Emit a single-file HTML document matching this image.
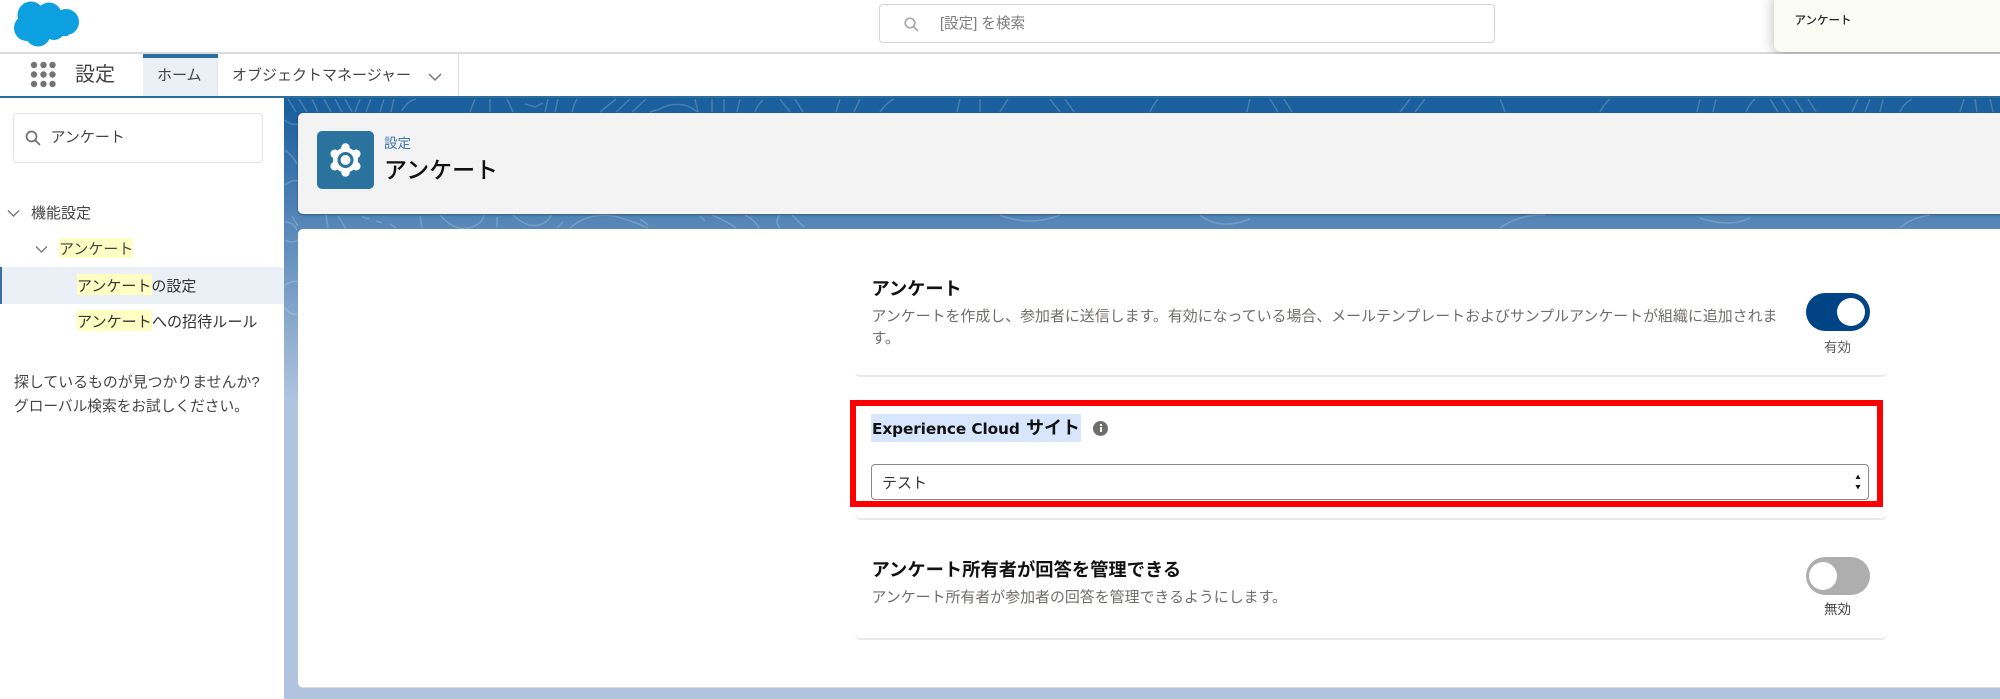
<!DOCTYPE html>
<html lang="ja">
<head>
<meta charset="utf-8">
<title>アンケート</title>
<style>
html,body{margin:0;padding:0;width:2000px;height:699px;overflow:hidden;background:#fff}
body{position:relative;font-family:"Liberation Sans","Noto Sans CJK JP",sans-serif;color:#444}
.a{position:absolute;white-space:nowrap}
.t{position:absolute;white-space:nowrap;line-height:24px;height:24px;font-size:15px;margin-top:1.4px}
svg{position:absolute;overflow:visible}
</style>
</head>
<body>
<!-- background -->
<div class="a" style="left:284px;top:98px;width:1716px;height:601px;background:linear-gradient(to bottom,#1b5f9e 0,#1b5f9e 12px,#b0c4df 302px,#b0c4df 100%)"></div>
<svg style="left:0;top:0" width="2000" height="699" fill="none" stroke="#fff" stroke-opacity=".2" stroke-width="1.5">
<path d="M288 99l8 13M299 99l8 13M312 99l6 13M324 99l7 13M335 99l7 13M345 99l7 13M360 99l-5 13M371 99l-5 13M384 99l-4 13M394 99l-3 13M402 111q5-10 14-12M475 99l-5 13M490 99v13M507 99l6 13M525 104l10 3 8-4M548 99l-3 13M558 99l-3 13M572 112q2-8 5-13M600 112l16-13M616 112l14-13M632 112l14-13M650 112l10-3q14-8 30-2l8 5M695 99l3 13M712 99v13M724 99v13M740 99l-3 13M755 112q3-8 8-12M780 99l10 13M795 99l8 13"/>
<path d="M1700 99l-3 13M1716 99l-3 13M1746 112q4-9 9-13M1770 99l8 13M1782 99l8 13M1795 99l8 13M1808 99l8 13M1852 112l6-13M1865 112l5-13M1880 112l3-13M1900 112q4-9 12-13M1960 112l4-13M1975 99l2 13M1990 99l3 13M840 99l-4 13M860 99l-6 13M880 112q6-9 14-13M960 99l-3 13M980 99v13M1000 112l8-13M1050 99l10 13M1065 99l9 13M1150 112q3-7 8-13M1250 99l-3 13M1270 99l8 13M1284 99l8 13M1400 112l10-13M1415 112l10-13M1500 99l5 13M1600 112q4-8 10-13"/>
<path d="M298 226l-6-10M326 215l2 13M338 216l8 13M362 217l8 2M376 221l6 2M390 224l6 4M420 216l2 12M440 215q14 16 28 13 14-3 16-13M497 217v10M513 215q14 13 26 10 10-3 12-10M557 228l6-6M570 228q18-16 44-12 22 6 34 12M640 219l8 6M700 216l5 5M712 215q18 8 24 13M745 215q10 5 14 13M780 215q-6 6 0 13M792 215l12 12"/>
<path d="M1000 215q30 12 60 0M1200 215q20 16 50 4M1500 228q20-14 45-13M1700 218q30 10 50 0M1900 228q10-10 30-13"/>
<path d="M285 150q8 6 12 14M285 185q8-6 13-4M285 222q8 0 12 8M285 240q7 4 13 0M285 285q7-5 13-3M285 308q6 8 13 6M285 120q6 6 13 4"/>
</svg>

<!-- top header -->
<div class="a" style="left:0;top:0;width:2000px;height:52px;background:#fff"></div>
<div class="a" style="left:0;top:52px;width:2000px;height:2px;background:#dcdcdc"></div>
<svg style="left:0;top:0" width="90" height="52" fill="#0ca0e0">
<rect x="24" y="12" width="44" height="24"/>
<circle cx="27" cy="28" r="13"/><circle cx="31" cy="15" r="13.5"/><circle cx="49" cy="15" r="12.5"/><circle cx="66" cy="22" r="13"/><circle cx="38" cy="34" r="12.5"/><circle cx="54" cy="29" r="11"/>
</svg>
<!-- global search -->
<div class="a" style="left:879px;top:4px;width:614px;height:37px;border:1.5px solid #d4d4d4;border-radius:4px;background:#fff"></div>
<svg style="left:904px;top:17px" width="15" height="15" fill="none" stroke="#a8a8a8" stroke-width="1.7"><circle cx="6" cy="6" r="4.8"/><path d="M9.5 9.5l4 4" stroke-linecap="round"/></svg>
<div class="t" style="left:940px;top:11px;color:#7c7c7c;font-size:14.6px">[設定] を検索</div>
<!-- popup top right -->
<div class="a" style="left:1774px;top:-10px;width:240px;height:62px;background:#fbfcf3;border-radius:8px;box-shadow:0 3px 14px rgba(0,0,0,.28)"></div>
<div class="t" style="left:1794.5px;top:7.5px;font-size:11.5px;color:#222;font-weight:500">アンケート</div>

<!-- nav -->
<div class="a" style="left:0;top:54px;width:2000px;height:42px;background:#fff"></div>
<div class="a" style="left:0;top:96px;width:2000px;height:2px;background:#266f9a"></div>
<svg style="left:0;top:54px" width="60" height="42" fill="#747474">
<circle cx="34" cy="11" r="3.2"/><circle cx="43.5" cy="11" r="3.2"/><circle cx="52.5" cy="11" r="3.2"/>
<circle cx="34" cy="20.5" r="3.2"/><circle cx="43.5" cy="20.5" r="3.2"/><circle cx="52.5" cy="20.5" r="3.2"/>
<circle cx="34" cy="30" r="3.2"/><circle cx="43.5" cy="30" r="3.2"/><circle cx="52.5" cy="30" r="3.2"/>
</svg>
<div class="t" style="left:75px;top:61.5px;font-size:20px;color:#444">設定</div>
<div class="a" style="left:143px;top:54px;width:75px;height:42px;background:#eaf0f6;border-right:1px solid #dfe5ea;box-sizing:border-box"></div>
<div class="a" style="left:143px;top:54px;width:75px;height:4px;background:#2a6f9d"></div>
<div class="t" style="left:157px;top:63px;color:#444">ホーム</div>
<div class="t" style="left:232px;top:63px;color:#444">オブジェクトマネージャー</div>
<svg style="left:428px;top:72px" width="14" height="10" fill="none" stroke="#777" stroke-width="1.5"><path d="M1 2l6 6 6-6"/></svg>
<div class="a" style="left:458px;top:54px;width:1px;height:42px;background:#dedede"></div>

<!-- sidebar -->
<div class="a" style="left:0;top:98px;width:284px;height:601px;background:#fff"></div>
<div class="a" style="left:13px;top:113px;width:248px;height:48px;border:1px solid #e3e3e3;border-radius:4px;background:#fff"></div>
<svg style="left:25px;top:130px" width="16" height="16" fill="none" stroke="#707070" stroke-width="1.7"><circle cx="6.5" cy="6.5" r="5"/><path d="M10.2 10.2l4.3 4.3" stroke-linecap="round"/></svg>
<div class="t" style="left:50.5px;top:125px">アンケート</div>
<svg style="left:7px;top:209px" width="13" height="9" fill="none" stroke="#777" stroke-width="1.4"><path d="M1 1.5l5.5 5.5 5.5-5.5"/></svg>
<div class="t" style="left:31px;top:200.5px">機能設定</div>
<svg style="left:35px;top:245px" width="13" height="9" fill="none" stroke="#777" stroke-width="1.4"><path d="M1 1.5l5.5 5.5 5.5-5.5"/></svg>
<div class="a" style="left:59px;top:238px;width:74px;height:20px;background:#ffffc4"></div>
<div class="t" style="left:59px;top:236.5px">アンケート</div>
<div class="a" style="left:0;top:267px;width:284px;height:37px;background:#eaf0f6"></div>
<div class="a" style="left:0;top:267px;width:2px;height:37px;background:#3b6ea5"></div>
<div class="a" style="left:77px;top:274px;width:75px;height:21px;background:#ffffc4"></div>
<div class="t" style="left:77px;top:273.5px;color:#333">アンケートの設定</div>
<div class="a" style="left:77px;top:310px;width:75px;height:21px;background:#ffffc4"></div>
<div class="t" style="left:77px;top:309.5px;color:#333;font-size:15.1px">アンケートへの招待ルール</div>
<div class="t" style="left:14px;top:370px;font-size:14.9px;color:#444">探しているものが見つかりませんか?</div>
<div class="t" style="left:14px;top:394px;font-size:14.7px;color:#444">グローバル検索をお試しください。</div>

<!-- page header -->
<div class="a" style="left:298px;top:113px;width:1720px;height:101px;background:#f3f3f3;border-radius:5px;box-shadow:0 1px 2px rgba(0,0,0,.3)"></div>
<div class="a" style="left:317px;top:131px;width:57px;height:58px;background:#2a739e;border-radius:5px"></div>
<svg style="left:317px;top:131px" width="57" height="58" stroke="#fff" fill="none" stroke-linecap="round">
<g stroke-width="8.5"><path d="M28.5 29V16.5M28.5 29V41.5M28.5 29L17.7 22.8M28.5 29L39.3 35.2M28.5 29L17.7 35.2M28.5 29L39.3 22.8"/></g>
<circle cx="28.5" cy="29" r="12.5" fill="#fff" stroke="none"/>
<circle cx="28.5" cy="29" r="6.5" stroke="#2a739e" stroke-width="3" fill="#fff"/>
</svg>
<div class="t" style="left:384px;top:130.5px;font-size:13.5px;color:#3a74b4">設定</div>
<div class="t" style="left:384px;top:156.5px;font-size:23px;color:#111;font-weight:500">アンケート</div>

<!-- content card -->
<div class="a" style="left:298px;top:229px;width:1720px;height:458px;background:#fff;border-radius:5px;border-bottom:1px solid #dcdcdc"></div>

<!-- row 1 -->
<div class="a" style="left:855px;top:300px;width:1032px;height:75px;border-bottom:2px solid #e9e9e9;border-radius:0 0 6px 6px"></div>
<div class="t" style="left:871.5px;top:275.5px;font-size:18.2px;color:#111;font-weight:700">アンケート</div>
<div class="t" style="left:871.5px;top:303.5px;font-size:14.93px;color:#706e6b">アンケートを作成し、参加者に送信します。有効になっている場合、メールテンプレートおよびサンプルアンケートが組織に追加されま</div>
<div class="t" style="left:871.5px;top:325.5px;font-size:14.93px;color:#706e6b">す。</div>
<div class="a" style="left:1806px;top:293px;width:64px;height:38px;border-radius:19px;background:#aeaeae;background:#014486"></div>
<div class="a" style="left:1837px;top:298px;width:28px;height:28px;border-radius:50%;background:#fff"></div>
<div class="t" style="left:1824px;top:335px;font-size:13.5px;color:#5c5c5c">有効</div>

<!-- row 2 -->
<div class="a" style="left:855px;top:440px;width:1032px;height:78px;border-bottom:2px solid #e9e9e9;border-radius:0 0 6px 6px"></div>
<div class="a" style="left:871px;top:414px;width:210px;height:28px;background:#d8e6fd"></div>
<div class="a" style="left:872px;top:416.5px;line-height:24px;height:24px;font-family:'DejaVu Sans',sans-serif;font-weight:700;font-size:15.3px;color:#111;letter-spacing:-.1px">Experience Cloud</div>
<div class="t" style="left:1026px;top:415px;font-size:18px;font-weight:700;color:#111">サイト</div>
<div class="a" style="left:1093px;top:420.5px;width:15px;height:15px;border-radius:50%;background:#706e6b"></div>
<div class="a" style="left:1099.5px;top:424px;width:2px;height:2px;background:#fff"></div>
<div class="a" style="left:1099.5px;top:427px;width:2px;height:5px;background:#fff"></div>
<div class="a" style="left:871px;top:464px;width:996px;height:34px;border:1.5px solid #8a8a8a;border-radius:4px;background:#fff"></div>
<div class="t" style="left:882px;top:471px;color:#333">テスト</div>
<svg style="left:1854px;top:472px" width="8" height="20" fill="#111"><path d="M1.5 7L4 2.5 6.5 7zM1.5 13L4 17.5 6.5 13z"/></svg>
<div class="a" style="left:850px;top:400px;width:1021px;height:95px;border:6px solid #f00"></div>

<!-- row 3 -->
<div class="a" style="left:855px;top:560px;width:1032px;height:78px;border-bottom:2px solid #e9e9e9;border-radius:0 0 6px 6px"></div>
<div class="t" style="left:871.5px;top:557px;font-size:18.3px;color:#111;font-weight:700">アンケート所有者が回答を管理できる</div>
<div class="t" style="left:871.5px;top:584.5px;font-size:14.93px;color:#706e6b">アンケート所有者が参加者の回答を管理できるようにします。</div>
<div class="a" style="left:1806px;top:557px;width:64px;height:38px;border-radius:19px;background:#aeaeae"></div>
<div class="a" style="left:1809px;top:562px;width:28px;height:28px;border-radius:50%;background:#fff"></div>
<div class="t" style="left:1824px;top:597px;font-size:13.5px;color:#444">無効</div>
</body>
</html>
